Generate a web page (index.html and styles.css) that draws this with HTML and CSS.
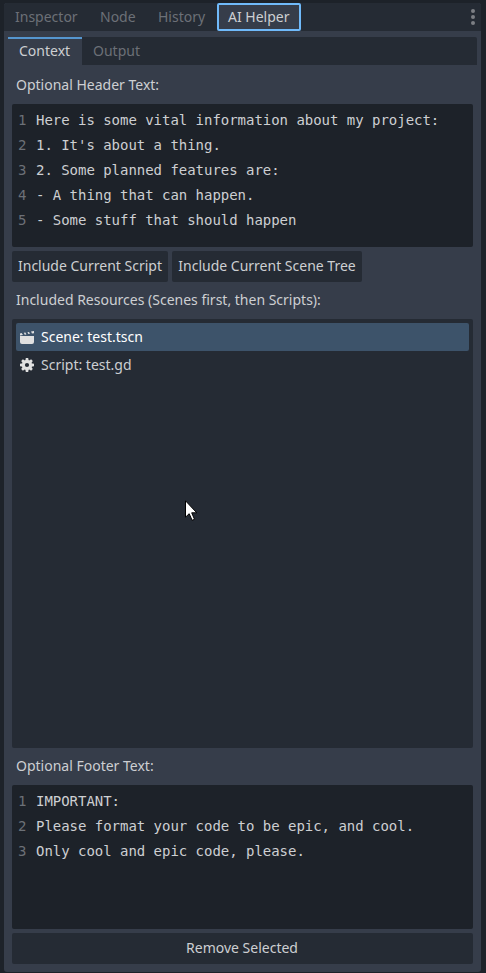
FILE: index.html
```html
<!DOCTYPE html>
<html lang="en">
<head>
<meta charset="utf-8">
<title>AI Helper</title>
<link rel="stylesheet" href="styles.css">
</head>
<body>
<main class="dock">
  <nav class="dock-tabs">
    <span class="tab inspector">Inspector</span>
    <span class="tab node">Node</span>
    <span class="tab history">History</span>
    <span class="tab active">AI Helper</span>
    <svg class="menu" width="4" height="16" viewBox="0 0 4 16"><circle cx="2" cy="2" r="2"/><circle cx="2" cy="8" r="2"/><circle cx="2" cy="14" r="2"/></svg>
  </nav>
  <nav class="sub-tabs">
    <span class="sub current">Context</span>
    <span class="sub">Output</span>
  </nav>
  <section class="content">
    <div class="label">Optional Header Text:</div>
    <div class="editor header-editor">
      <div class="line"><span class="num">1</span><span>Here is some vital information about my project:</span></div>
      <div class="line"><span class="num">2</span><span>1. It's about a thing.</span></div>
      <div class="line"><span class="num">3</span><span>2. Some planned features are:</span></div>
      <div class="line"><span class="num">4</span><span>- A thing that can happen.</span></div>
      <div class="line"><span class="num">5</span><span>- Some stuff that should happen</span></div>
    </div>
    <div class="buttons">
      <div class="button script">Include Current Script</div>
      <div class="button tree">Include Current Scene Tree</div>
    </div>
    <div class="label resources-label">Included Resources (Scenes first, then Scripts):</div>
    <div class="list">
      <div class="item selected">
        <svg width="16" height="16" viewBox="0 0 16 16"><path d="M1 7h14v6a2 2 0 0 1-2 2H3a2 2 0 0 1-2-2zM1 4.4l1.6-.3L4 6l-3 .5zM4.8 3.8l1.6-.3 1 1.9-1.6.3zM8.4 3.2l1.6-.3 1 1.9-1.6.3zM12 2.6l3-.6v2.2l-2 .3z"/></svg>
        <span>Scene: test.tscn</span>
      </div>
      <div class="item">
        <svg width="16" height="16" viewBox="0 0 16 16"><circle class="gear-ring" cx="8" cy="8" r="3.6"/><path d="M6.8 1h2.4l.5 3H6.3zM6.8 15h2.4l.5-3H6.3zM1 6.8v2.4l3 .5V6.3zM15 6.8v2.4l-3 .5V6.3zM2.2 3.9l1.7-1.7 2.5 1.8L4 6.4zM12.1 2.2l1.7 1.7L12 6.4 9.6 4zM13.8 12.1l-1.7 1.7L9.6 12 12 9.6zM3.9 13.8l-1.7-1.7L4 9.6 6.4 12z"/></svg>
        <span>Script: test.gd</span>
      </div>
    </div>
    <div class="label footer-label">Optional Footer Text:</div>
    <div class="editor footer-editor">
      <div class="line"><span class="num">1</span><span>IMPORTANT:</span></div>
      <div class="line"><span class="num">2</span><span>Please format your code to be epic, and cool.</span></div>
      <div class="line"><span class="num">3</span><span>Only cool and epic code, please.</span></div>
    </div>
    <div class="button remove">Remove Selected</div>
  </section>
</main>
<svg class="cursor" width="13" height="22" viewBox="0 0 13 22"><path d="M.5.8v16.4l3.7-3.5 2.9 6.6 2.4-1-2.8-6.5h5.1z"/></svg>
</body>
</html>
```
FILE: styles.css
```css
* { box-sizing: border-box; }
body {
  margin: 0;
  height: 973px;
  padding: 3px 5px 1px 4px;
  overflow: hidden;
  background: #1d2229;
  color: #cdcfd2;
  font: 14px/20px "Noto Sans", sans-serif;
  white-space: nowrap;
}
.dock {
  height: 969px;
  background: #363d4a;
  border-radius: 3px;
  overflow: hidden;
}
.dock-tabs {
  display: flex;
  height: 28px;
  background: #252b34;
  color: #6c7077;
  line-height: 28px;
}
.tab { padding-left: 11px; }
.inspector { width: 85px; }
.node { width: 58px; }
.history { width: 70px; }
.active {
  width: 84px;
  padding-left: 9px;
  line-height: 24px;
  border: 2px solid #70bafa;
  border-radius: 2px;
  background: #363d4a;
  color: #cdcfd2;
}
.menu {
  margin: 6px 6px 0 auto;
  fill: #7c7f84;
}
.sub-tabs {
  display: flex;
  height: 28px;
  margin: 6px 4px 0;
  border-radius: 0 2px 0 0;
  background: #252b34;
  color: #6c7077;
  line-height: 28px;
}
.sub { padding-left: 11px; }
.current {
  width: 74px;
  border-top: 2px solid #5596cf;
  background: #363d4a;
  color: #cdcfd2;
  line-height: 24px;
}
.content {
  display: flex;
  flex-direction: column;
  padding: 0 8px;
}
.label {
  height: 39px;
  padding-left: 4px;
  line-height: 39px;
}
.resources-label, .footer-label { height: 37px; line-height: 36px; }
.editor {
  padding: 4px 6px;
  border-radius: 2px;
  background: #1d2229;
  font: 14px/25px "DejaVu Sans Mono", monospace;
  letter-spacing: -0.028px;
}
.header-editor { height: 143px; }
.footer-editor { height: 144px; }
.line { display: flex; }
.num { width: 18px; color: #6c7077; }
.buttons {
  display: flex;
  gap: 4px;
  margin-top: 4px;
}
.button {
  height: 31px;
  border-radius: 2px;
  background: #252b34;
  line-height: 30px;
  text-align: center;
}
.script { width: 156px; }
.tree { width: 190px; }
.remove { margin-top: 4px; padding-right: 1px; }
.list {
  height: 429px;
  padding: 4px;
  border-radius: 2px;
  background: #252b34;
}
.item {
  display: flex;
  align-items: center;
  gap: 6px;
  height: 28px;
  padding-left: 3px;
  border-radius: 2px;
}
.item svg { fill: #e0e0e0; }
.item .gear-ring {
  fill: none;
  stroke: #e0e0e0;
  stroke-width: 3;
}
.selected { background: #3d536a; color: #fff; }
.cursor {
  position: absolute;
  left: 185px;
  top: 500px;
  fill: #fff;
  stroke: #000;
}
```
